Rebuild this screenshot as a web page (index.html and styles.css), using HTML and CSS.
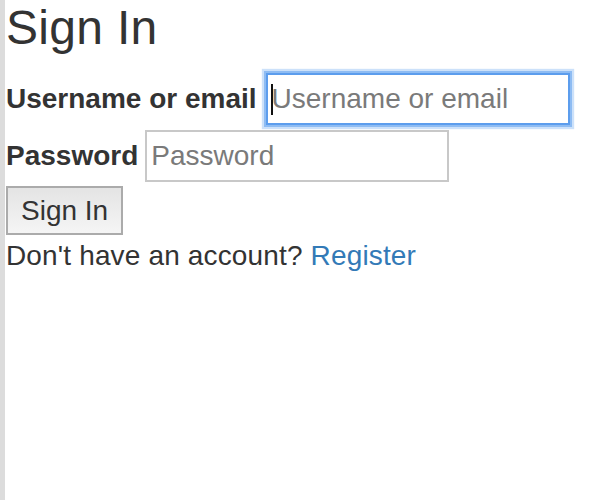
FILE: index.html
```html
<!DOCTYPE html>
<html>
<head>
<meta charset="utf-8">
<link rel="stylesheet" href="styles.css">
</head>
<body>
<div class="page">
  <h1 class="title">Sign In</h1>
  <form class="form">
    <div class="row row-user">
      <label class="label" for="user">Username or email</label>
      <span class="field-wrap">
        <input class="input input-focus" id="user" type="text" placeholder="Username or email">
        <span class="caret"></span>
      </span>
    </div>
    <div class="row row-pass">
      <label class="label" for="pass">Password</label>
      <input class="input" id="pass" type="password" placeholder="Password">
    </div>
    <button class="btn" type="button">Sign In</button>
    <p class="note">Don't have an account? <a class="link" href="#">Register</a></p>
  </form>
</div>
</body>
</html>
```
FILE: styles.css
```css
html, body {
  margin: 0;
  padding: 0;
  background: #fff;
}
body {
  font-family: "Liberation Sans", Arial, Helvetica, sans-serif;
  color: #333;
}
.page {
  border-left: 5px solid #dcdcdc;
  min-height: 500px;
  box-sizing: border-box;
  padding-left: 1px;
}
.title {
  margin: 0;
  font-size: 48px;
  line-height: 55px;
  font-weight: normal;
  color: #333;
  letter-spacing: 0.3px;
}
.form {
  display: flex;
  flex-direction: column;
  align-items: flex-start;
}
.row {
  display: flex;
  align-items: center;
  gap: 9px;
}
.row-user {
  margin-top: 18px;
}
.row-pass {
  margin-top: 5px;
  gap: 7px;
}
.label {
  font-size: 28px;
  font-weight: bold;
  line-height: 32px;
  color: #333;
}
.field-wrap {
  position: relative;
  display: block;
}
.input {
  display: block;
  box-sizing: border-box;
  width: 304px;
  height: 52px;
  margin: 0;
  padding: 8px 4px;
  border: 2px solid #c8c8c8;
  border-radius: 0;
  font-family: "Liberation Sans", Arial, sans-serif;
  font-size: 28px;
  line-height: 32px;
  color: #333;
  background: #fff;
  outline: none;
}
.input::placeholder {
  color: #7a7a7a;
  opacity: 1;
}
.input-focus {
  border-color: #5c9ded;
  box-shadow: 0 0 0 2px #8ebcf3, 0 0 1px 4px rgba(170, 205, 247, 0.6);
}
.caret {
  position: absolute;
  left: 5px;
  top: 11px;
  width: 2px;
  height: 31px;
  background: #111;
}
.btn {
  margin-top: 4px;
  box-sizing: border-box;
  height: 49px;
  padding: 0 13px;
  border: 2px solid #ababab;
  border-radius: 0;
  background: linear-gradient(#e4e4e4, #f5f5f5);
  font-family: "Liberation Sans", Arial, sans-serif;
  font-size: 28px;
  line-height: 32px;
  color: #333;
}
.note {
  margin: 5px 0 0;
  font-size: 28px;
  line-height: 32px;
  color: #333;
  letter-spacing: 0.15px;
}
.link {
  color: #337ab7;
  text-decoration: none;
}
```
